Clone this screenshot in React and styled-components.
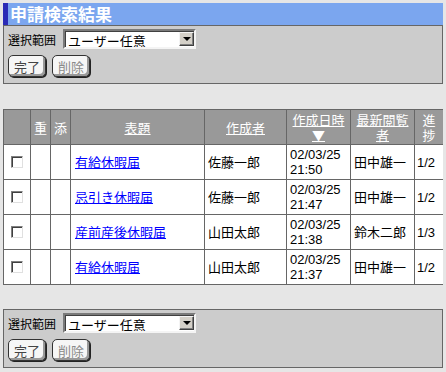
import React from 'react';
import styled, { createGlobalStyle } from 'styled-components';

const GlobalStyle = createGlobalStyle`
  body {
    margin: 3px;
    background: #e6e6e6;
    font-family: "Liberation Sans", "Noto Sans CJK JP", sans-serif;
    font-size: 12px;
    color: #000;
  }
`;

const TitleBar = styled.h1`
  margin: 0;
  height: 22px;
  line-height: 22px;
  padding-left: 2px;
  background: #7ba6ef;
  border-left: 5px solid #2b2bb6;
  color: #fff;
  font-family: "Noto Sans CJK JP", sans-serif;
  font-size: 17px;
  font-weight: bold;
`;

const Panel = styled.div`
  background: #cccccc;
  border: 1px solid #666;
  padding: 3px 4px 6px 3px;
  margin-top: ${props => props.gap || 0}px;
`;

const FieldRow = styled.div`
  display: flex;
  align-items: center;
  gap: 7px;
`;

const Label = styled.span`
  font-family: "Noto Sans CJK JP", sans-serif;
  font-size: 12px;
  padding-left: 1px;
`;

const SelectWrap = styled.div`
  position: relative;
  width: 133px;
  height: 20px;
`;

const Select = styled.select`
  appearance: none;
  width: 100%;
  height: 100%;
  margin: 0;
  padding: 0 20px 0 3px;
  box-sizing: border-box;
  background: #fff;
  border: 2px solid;
  border-color: #7a7a7a #f4f4f4 #f4f4f4 #7a7a7a;
  box-shadow: inset 1px 1px 0 #404040;
  font-family: "Noto Sans CJK JP", sans-serif;
  font-size: 13px;
  color: #000;
  border-radius: 0;
`;

const Arrow = styled.span`
  position: absolute;
  top: 3px;
  right: 2px;
  width: 15px;
  height: 14px;
  box-sizing: border-box;
  background: #d4d0c8;
  border: 1px solid;
  border-color: #f4f4f4 #404040 #404040 #f4f4f4;
  box-shadow: inset -1px -1px 0 #808080;
  pointer-events: none;

  &::after {
    content: '';
    position: absolute;
    left: 3px;
    top: 4px;
    border-left: 4px solid transparent;
    border-right: 4px solid transparent;
    border-top: 4px solid #000;
  }
`;

const ButtonRow = styled.div`
  display: flex;
  gap: 6px;
  margin-top: 6px;
  padding-left: 1px;
`;

const Button = styled.button`
  width: ${props => props.w}px;
  height: 22px;
  margin: 0;
  padding: 0;
  background: #f6f6f6;
  border: 1px solid #333;
  border-radius: 5px;
  box-shadow: inset -2px -2px 0 #9a9a9a, 1px 1px 0 #222;
  font-family: "Noto Sans CJK JP", sans-serif;
  font-size: 13px;
  color: ${props => (props.disabled ? '#8a8a8a' : '#444')};
`;

const Table = styled.table`
  width: 100%;
  margin-top: 25px;
  border-collapse: collapse;
  table-layout: fixed;
  background: #fff;
`;

const Th = styled.th`
  box-sizing: border-box;
  width: ${props => props.w}px;
  height: 35px;
  padding: 0 3px;
  background: #999;
  border: 1px solid #666;
  font-weight: normal;
  font-family: "Noto Sans CJK JP", sans-serif;
  font-size: 13px;
  line-height: 15px;
  color: #fff;
  text-align: center;
  vertical-align: middle;
`;

const HeadLink = styled.a`
  color: #fff;
  text-decoration: underline;
`;

const Td = styled.td`
  height: 34px;
  padding: 0 ${props => props.pad ?? 3}px;
  border: 1px solid #666;
  font-family: "Liberation Sans", "Noto Sans CJK JP", sans-serif;
  font-size: 13px;
  line-height: 15px;
  text-align: ${props => props.align || 'left'};
  vertical-align: middle;
  white-space: nowrap;
  overflow: hidden;
`;

const TitleLink = styled.a`
  color: #0000ff;
  text-decoration: underline;
  font-family: "Noto Sans CJK JP", sans-serif;
`;

const Check = styled.input`
  appearance: none;
  display: block;
  margin: 0 auto;
  width: 12px;
  height: 12px;
  box-sizing: border-box;
  background: #fff;
  border: 1px solid;
  border-color: #808080 #e0e0e0 #e0e0e0 #808080;
  box-shadow: inset 1px 1px 0 #404040;
`;

const rows = [
  { title: '有給休暇届', author: '佐藤一郎', date: '02/03/25', time: '21:50', viewer: '田中雄一', progress: '1/2' },
  { title: '忌引き休暇届', author: '佐藤一郎', date: '02/03/25', time: '21:47', viewer: '田中雄一', progress: '1/2' },
  { title: '産前産後休暇届', author: '山田太郎', date: '02/03/25', time: '21:38', viewer: '鈴木二郎', progress: '1/3' },
  { title: '有給休暇届', author: '山田太郎', date: '02/03/25', time: '21:37', viewer: '田中雄一', progress: '1/2' },
];

const ControlPanel = ({ gap }) => (
  <Panel gap={gap}>
    <FieldRow>
      <Label>選択範囲</Label>
      <SelectWrap>
        <Select defaultValue="any">
          <option value="any">ユーザー任意</option>
        </Select>
        <Arrow />
      </SelectWrap>
    </FieldRow>
    <ButtonRow>
      <Button w={38}>完了</Button>
      <Button w={38} disabled>削除</Button>
    </ButtonRow>
  </Panel>
);

const App = () => (
  <>
    <GlobalStyle />
    <TitleBar>申請検索結果</TitleBar>
    <ControlPanel />
    <Table>
      <thead>
        <tr>
          <Th w={27} />
          <Th w={20}>重</Th>
          <Th w={20}>添</Th>
          <Th w={134}><HeadLink href="#">表題</HeadLink></Th>
          <Th w={82}><HeadLink href="#">作成者</HeadLink></Th>
          <Th w={64}><HeadLink href="#">作成日時<br />▼</HeadLink></Th>
          <Th w={64}><HeadLink href="#">最新閲覧者</HeadLink></Th>
          <Th w={29}>進捗</Th>
        </tr>
      </thead>
      <tbody>
        {rows.map((row, i) => (
          <tr key={i}>
            <Td align="center"><Check type="checkbox" /></Td>
            <Td />
            <Td />
            <Td pad={4}><TitleLink href="#">{row.title}</TitleLink></Td>
            <Td>{row.author}</Td>
            <Td>{row.date}<br />{row.time}</Td>
            <Td>{row.viewer}</Td>
            <Td pad={2}>{row.progress}</Td>
          </tr>
        ))}
      </tbody>
    </Table>
    <ControlPanel gap={24} />
  </>
);

export default App;
